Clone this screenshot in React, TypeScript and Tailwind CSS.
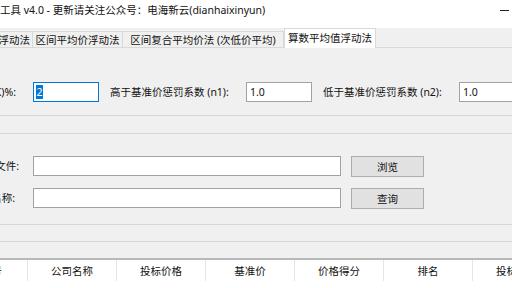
import * as React from "react";

const tabs = [
  { label: "基准价浮动法", w: "w-[33px]", clip: true },
  { label: "区间平均价浮动法", w: "w-[90px]" },
  { label: "区间复合平均价法 (次低价平均)", w: "w-[161px]" },
];

const columns = ["公司名称", "投标价格", "基准价", "价格得分", "排名", "投标时间"];

function TextBox({ value, className, focused }: { value?: string; className?: string; focused?: boolean }) {
  return (
    <div className={`h-[20px] shrink-0 bg-white border flex items-center px-[2px] ${focused ? "border-[#0078d7]" : "border-[#a2a2a2]"} ${className ?? ""}`}>
      {focused ? (
        <span className="bg-[#0078d7] text-white leading-[14px] px-[0.5px]">{value}</span>
      ) : (
        <span className="leading-[14px] pl-[1px]">{value}</span>
      )}
    </div>
  );
}

function Label({ text, className }: { text: string; className?: string }) {
  return (
    <div className={`flex justify-end overflow-hidden whitespace-nowrap shrink-0 ${className ?? ""}`}>
      <span className="shrink-0">{text}</span>
    </div>
  );
}

function Btn({ text }: { text: string }) {
  return (
    <button className="w-[73px] h-[21px] ml-[10px] shrink-0 bg-[#e1e1e1] border border-[#adadad] text-center leading-[14px]">
      {text}
    </button>
  );
}

export default function App() {
  return (
    <div className="w-[512px] h-[288px] overflow-hidden bg-[#f0f0f0] text-[#111] text-[10.5px] leading-[14px] font-['Noto_Sans','Noto_Sans_CJK_SC',sans-serif] flex flex-col">
      {/* title bar */}
      <div className="h-[28px] shrink-0 bg-white flex justify-between items-start pt-[3px] overflow-hidden whitespace-nowrap">
        <span className="-ml-[21px]">评标工具 v4.0 - 更新请关注公众号：电海新云(dianhaixinyun)</span>
        <div className="w-[9px] h-px bg-[#222] mt-[7px] mr-[3px]" />
      </div>

      {/* tab strip */}
      <div className="h-[20px] shrink-0 flex items-end border-b border-[#d9d9d9] whitespace-nowrap">
        {tabs.map((t) => (
          <div
            key={t.label}
            className={`${t.w} h-[16px] shrink-0 flex items-center border-r border-t border-[#d9d9d9] bg-[#f0f0f0] overflow-hidden ${t.clip ? "justify-end pr-[2px]" : "justify-center"}`}
          >
            <span className="shrink-0">{t.label}</span>
          </div>
        ))}
        <div className="w-[92px] h-[20px] shrink-0 -mb-px bg-white border-x border-t border-[#d9d9d9] flex items-center justify-center pb-[1px]">
          算数平均值浮动法
        </div>
      </div>

      {/* parameters */}
      <div className="h-[20px] mt-[34px] shrink-0 flex items-center overflow-hidden">
        <Label text="下浮系数(K)%:" className="w-[16px]" />
        <TextBox value="2" focused className="w-[66px] ml-[17px]" />
        <div className="w-[136px] ml-[11px] shrink-0 whitespace-nowrap">高于基准价惩罚系数 (n1):</div>
        <TextBox value="1.0" className="w-[66px]" />
        <div className="w-[136px] ml-[11px] shrink-0 whitespace-nowrap">低于基准价惩罚系数 (n2):</div>
        <TextBox value="1.0" className="w-[80px]" />
      </div>

      <div className="h-px mt-[13px] bg-[#d7d7d7] shrink-0" />
      <div className="h-px mt-[17px] bg-[#d7d7d7] shrink-0" />

      {/* file / query */}
      <div className="h-[21px] mt-[22px] shrink-0 flex items-start">
        <Label text="选择文件:" className="w-[19px] h-[20px] items-center" />
        <TextBox className="w-[308px] ml-[14px]" />
        <Btn text="浏览" />
      </div>
      <div className="h-[21px] mt-[11px] shrink-0 flex items-start">
        <Label text="公司名称:" className="w-[15px] h-[20px] items-center" />
        <TextBox className="w-[308px] ml-[18px]" />
        <Btn text="查询" />
      </div>

      <div className="h-px mt-[15px] bg-[#d7d7d7] shrink-0" />
      <div className="h-px mt-[16px] bg-[#d7d7d7] shrink-0" />

      {/* results grid */}
      <div className="mt-[16px] flex-1 bg-white border-t-2 border-[#b9b9b9]">
        <div className="h-[21px] flex whitespace-nowrap">
          <div className="w-[28px] shrink-0 flex items-center border-r border-[#e5e5e5] overflow-hidden">
            <span className="-ml-[19px] shrink-0">序号</span>
          </div>
          {columns.map((c) => (
            <div key={c} className="w-[89px] shrink-0 flex items-center justify-center border-r border-[#e5e5e5]">
              {c}
            </div>
          ))}
        </div>
      </div>
    </div>
  );
}
